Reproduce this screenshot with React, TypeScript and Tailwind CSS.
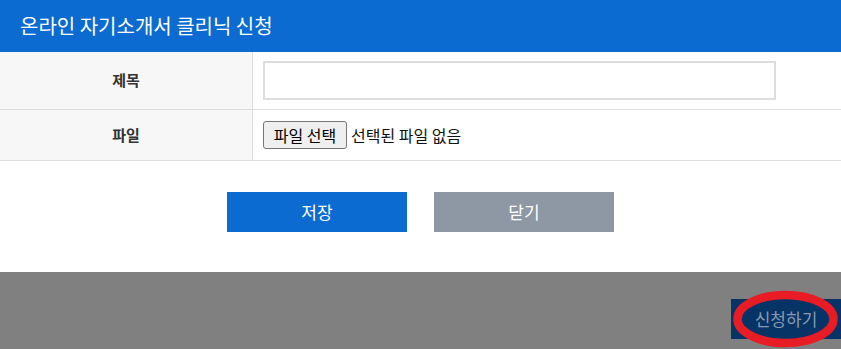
import React from "react";

const font = { fontFamily: '"Noto Sans CJK KR", "Noto Sans", sans-serif' };

export default function App() {
  return (
    <div
      className="relative flex h-[349px] w-[841px] flex-col overflow-hidden bg-[#808080]"
      style={font}
    >
      {/* modal */}
      <div className="bg-white">
        <div className="flex h-[52px] items-center bg-[#0b6bd1] pl-5 text-[20px] text-white">
          온라인 자기소개서 클리닉 신청
        </div>
        <div className="flex h-[58px] border-b border-[#dddddd]">
          <div className="flex w-[253px] items-center justify-center border-r border-[#dddddd] bg-[#f7f7f7] text-[15px] font-bold text-[#333333]">
            제목
          </div>
          <div className="flex flex-1 items-center pl-[10px]">
            <input
              type="text"
              className="h-[39px] w-[513px] border-2 border-[#dddddd] bg-white outline-none"
            />
          </div>
        </div>
        <div className="flex h-[51px] border-b border-[#dddddd]">
          <div className="flex w-[253px] items-center justify-center border-r border-[#dddddd] bg-[#f7f7f7] text-[15px] font-bold text-[#333333]">
            파일
          </div>
          <div className="flex flex-1 items-center gap-[4px] pl-[10px] text-[16px] text-[#111111]">
            <button className="h-[28px] w-[84px] rounded-[3px] border border-[#767676] bg-[#efefef] text-[16px] text-black">
              파일 선택
            </button>
            <span>선택된 파일 없음</span>
          </div>
        </div>
        <div className="flex h-[111px] items-start justify-center gap-[27px] pt-[31px]">
          <button className="h-[40px] w-[180px] bg-[#0b6bd1] text-[17px] text-white">
            저장
          </button>
          <button className="h-[40px] w-[180px] bg-[#8e97a4] text-[17px] text-white">
            닫기
          </button>
        </div>
      </div>

      {/* page behind overlay */}
      <div className="flex justify-end pt-[27px]">
        <div className="flex h-[40px] w-[110px] items-center justify-center bg-[#073466] text-[17px] text-[#8a9ab0]">
          신청하기
        </div>
      </div>

      {/* red annotation ellipse */}
      <svg
        className="pointer-events-none absolute left-[725px] top-[285px]"
        width="116"
        height="64"
        viewBox="0 0 116 64"
      >
        <ellipse
          cx="60.5"
          cy="34"
          rx="48"
          ry="24"
          fill="none"
          stroke="#e81c24"
          strokeWidth="8.5"
        />
      </svg>
    </div>
  );
}
